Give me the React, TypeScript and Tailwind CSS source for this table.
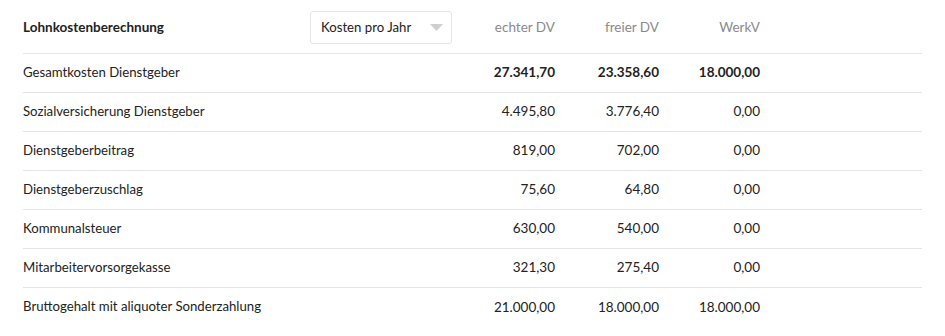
const rows = [
  { label: "Gesamtkosten Dienstgeber", values: ["27.341,70", "23.358,60", "18.000,00"], bold: true },
  { label: "Sozialversicherung Dienstgeber", values: ["4.495,80", "3.776,40", "0,00"] },
  { label: "Dienstgeberbeitrag", values: ["819,00", "702,00", "0,00"] },
  { label: "Dienstgeberzuschlag", values: ["75,60", "64,80", "0,00"] },
  { label: "Kommunalsteuer", values: ["630,00", "540,00", "0,00"] },
  { label: "Mitarbeitervorsorgekasse", values: ["321,30", "275,40", "0,00"] },
  { label: "Bruttogehalt mit aliquoter Sonderzahlung", values: ["21.000,00", "18.000,00", "18.000,00"] },
]

export default function App() {
  return (
    <div className="w-[945px] h-[336px] bg-white px-[23px] text-[13.5px] text-[#222] font-['Lato',sans-serif]">
      {/* Header */}
      <div className="grid grid-cols-[432px_100px_104px_101px_1fr] items-center h-[54px] border-b border-[#e4e4e4] pt-[2px]">
        <div className="flex items-center justify-between pr-[3px]">
          <span className="font-bold">Lohnkostenberechnung</span>
          <div className="flex items-center justify-between w-[142px] h-[33px] border border-[#e6e6e6] rounded-[3px] pl-[10px] pr-[8px]">
            <span className="text-[13.2px]">Kosten pro Jahr</span>
            <svg width="13" height="8" viewBox="0 0 13 8">
              <path d="M0 0 L13 0 L6.5 7 Z" fill="#cfcfcf" />
            </svg>
          </div>
        </div>
        <span className="text-right text-[#8a8a8a]">echter DV</span>
        <span className="text-right text-[#8a8a8a]">freier DV</span>
        <span className="text-right text-[#8a8a8a]">WerkV</span>
        <span />
      </div>
      {rows.map((row, i) => (
        <div
          key={row.label}
          className={`grid grid-cols-[432px_100px_104px_101px_1fr] items-center h-[39px] pb-[1px] ${
            i < rows.length - 1 ? "border-b border-[#e4e4e4]" : ""
          }`}
        >
          <span className="text-[13.2px]">{row.label}</span>
          {row.values.map((v, j) => (
            <span key={j} className={`text-right ${row.bold ? "font-bold" : ""}`}>
              {v}
            </span>
          ))}
          <span />
        </div>
      ))}
    </div>
  )
}
